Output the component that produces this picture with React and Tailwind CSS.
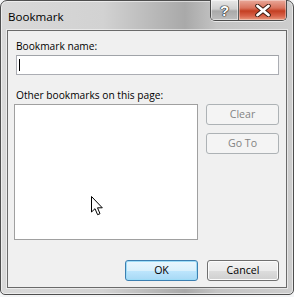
import React from "react";

function Btn({ children, w, kind }) {
  const base =
    "flex items-center justify-center h-[21px] rounded-[3px] border text-[10.6px] leading-none";
  if (kind === "disabled")
    return (
      <div className={`${base} border-[#adb2b5] bg-[#f4f4f4] text-[#838383]`} style={{ width: w }}>
        {children}
      </div>
    );
  if (kind === "default")
    return (
      <div
        className={`${base} border-[#3c7fb1] text-black bg-[linear-gradient(#eaf6fd_0%,#d9f0fc_50%,#bee6fd_51%,#a7d9f5_100%)] shadow-[inset_0_0_0_1px_#9edcf7]`}
        style={{ width: w }}
      >
        {children}
      </div>
    );
  return (
    <div
      className={`${base} border-[#707070] text-black bg-[linear-gradient(#f2f2f2_0%,#ebebeb_50%,#dddddd_51%,#cfcfcf_100%)] shadow-[inset_0_0_0_1px_#fcfcfc]`}
      style={{ width: w }}
    >
      {children}
    </div>
  );
}

export default function App() {
  return (
    <div
      className="w-[294px] h-[297px] bg-[#f4f5f6] overflow-hidden"
      style={{ fontFamily: '"Segoe UI", "Open Sans", "Noto Sans", sans-serif' }}
    >
      <div className="relative w-[294px] h-[295px] rounded-t-[7px] rounded-b-[5px] border border-[#4e4e4e] bg-[linear-gradient(90deg,#d9d9d9_0%,#d2d2d2_35%,#b9b9b9_52%,#a9a9a9_63%,#c4c4c4_74%,#cdcdcd_100%)] shadow-[inset_0_0_0_1px_rgba(255,255,255,0.55)] flex flex-col">
        {/* title bar */}
        <div className="h-[29px] flex items-start shrink-0">
          <div className="pl-[7px] pt-[8px] text-[11.6px] leading-[16px] text-black">Bookmark</div>
          <div className="ml-auto mr-[6px] mt-[-1px] flex h-[21px] rounded-b-[5px] border border-[#4a4a4a] border-t-0 overflow-hidden shadow-[0_1px_0_rgba(255,255,255,0.6)]">
            <div className="w-[28px] flex items-center justify-center bg-[linear-gradient(#e8e8e8_0%,#cfcfcf_45%,#a9a9a9_55%,#bdbdbd_100%)] border-r border-[#5a5a5a] shadow-[inset_0_0_0_1px_rgba(255,255,255,0.5)]">
              <span
                className="text-[15px] font-bold leading-none text-white"
                style={{
                  fontFamily: '"Liberation Sans", sans-serif',
                  textShadow: "0 0 1px #222, 0 0 1px #222, 0 0 1px #222, 0 0 1px #222",
                }}
              >
                ?
              </span>
            </div>
            <div className="w-[47px] flex items-center justify-center bg-[linear-gradient(#e9a99a_0%,#d9735d_40%,#c43f22_55%,#d8634a_80%,#e89a7e_100%)] shadow-[inset_0_0_0_1px_rgba(255,255,255,0.35)]">
              <svg width="16" height="13" viewBox="0 0 16 13">
                <path
                  d="M2.5 2 L13.5 11 M13.5 2 L2.5 11"
                  stroke="#3a1a10"
                  strokeWidth="4.6"
                  strokeLinecap="round"
                />
                <path
                  d="M2.5 2 L13.5 11 M13.5 2 L2.5 11"
                  stroke="#ffffff"
                  strokeWidth="2.8"
                  strokeLinecap="round"
                />
              </svg>
            </div>
          </div>
        </div>
        {/* client */}
        <div className="mx-[6px] h-[258px] border border-[#6a6a6a] bg-[#f0f0f0] shadow-[0_0_0_1px_rgba(255,255,255,0.5)] flex flex-col pl-[8px] pr-[7px] text-[10.2px] text-black">
          <div className="mt-[7px] h-[16px] leading-[16px]">Bookmark name:</div>
          <div className="mt-[1px] h-[20px] border border-[#abadb3] border-t-[#a0a3a8] bg-white flex items-center pl-[2px]">
            <div className="w-[1px] h-[12px] bg-black" />
          </div>
          <div className="mt-[12px] h-[16px] leading-[16px]">Other bookmarks on this page:</div>
          <div className="mt-[1px] flex">
            <div className="relative ml-[-2px] w-[184px] h-[136px] border border-[#a0a0a0] bg-white">
              <svg
                className="absolute left-[76px] top-[91px]"
                width="13"
                height="20"
                viewBox="0 0 13 20"
              >
                <path
                  d="M0.5 0.5 L0.5 16 L4 12.7 L6.6 18.7 L9 17.7 L6.5 11.8 L11.3 11.8 Z"
                  fill="white"
                  stroke="black"
                  strokeWidth="1"
                  strokeLinejoin="miter"
                />
              </svg>
            </div>
            <div className="ml-auto flex flex-col gap-[8px]">
              <Btn w={73} kind="disabled">Clear</Btn>
              <Btn w={73} kind="disabled">Go To</Btn>
            </div>
          </div>
          <div className="mt-[20px] flex justify-end gap-[9px]">
            <Btn w={73} kind="default">OK</Btn>
            <Btn w={72}>Cancel</Btn>
          </div>
        </div>
      </div>
    </div>
  );
}
